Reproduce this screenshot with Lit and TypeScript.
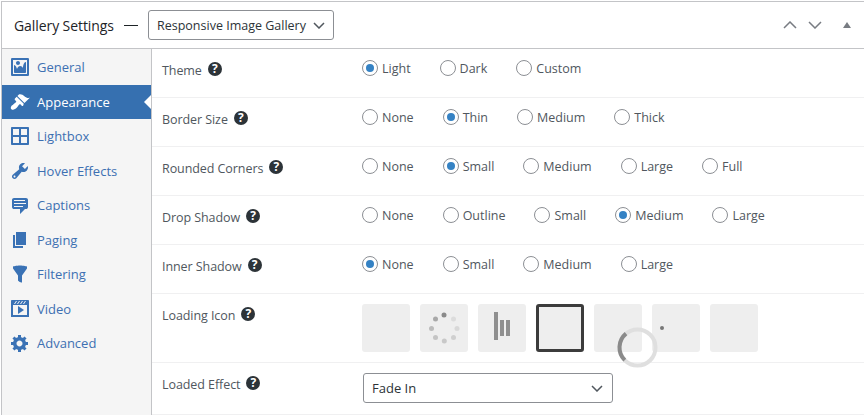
import { LitElement, html, css, svg } from "lit";
import { customElement } from "lit/decorators.js";

const NAV: [string, string, boolean?][] = [
  ["General", "M2.25 1h15.5c.69 0 1.25.56 1.25 1.25v15.5c0 .69-.56 1.25-1.25 1.25H2.25C1.56 19 1 18.44 1 17.75V2.25C1 1.56 1.56 1 2.25 1zM17 17V3H3v14h14zM10 6c0-1.1-.9-2-2-2s-2 .9-2 2 .9 2 2 2 2-.9 2-2zm3 5s0-6 3-6v10c0 .55-.45 1-1 1H5c-.55 0-1-.45-1-1V8c2 0 3 4 3 4s1-3 3-3 3 2 3 2z"],
  ["Appearance", "M14.48 11.06L7.41 3.99l1.5-1.5c.5-.56 2.3-.47 3.51.32 1.21.8 1.43 1.28 2.91 2.1 1.18.64 2.45 1.26 4.45.85zm-.71.71L6.7 4.7 4.93 6.47c-.39.39-.39 1.02 0 1.41l1.06 1.06c.39.39.39 1.03 0 1.42-.6.6-1.43 1.11-2.21 1.69-.35.26-.7.53-1.01.84C1.43 13.23 0 15.74 1.43 17.17s3.94 0 5.28-1.34c.31-.31.58-.66.85-1.01.57-.78 1.08-1.61 1.69-2.21.39-.39 1.02-.39 1.41 0l1.06 1.06c.39.39 1.02.39 1.41 0z", true],
  ["Lightbox", "M2 1h16c.55 0 1 .45 1 1v16c0 .55-.45 1-1 1H2c-.55 0-1-.45-1-1V2c0-.55.45-1 1-1zm7.01 7.99v-6H3v6h6.01zm8 0v-6h-6v6h6zm-8 8.01v-6H3v6h6.01zm8 0v-6h-6v6h6z"],
  ["Hover Effects", "M16.68 9.77c-1.34 1.34-3.3 1.67-4.95.99l-5.41 6.52c-.99.99-2.59.99-3.58 0s-.99-2.59 0-3.57l6.52-5.42c-.68-1.65-.35-3.61.99-4.95 1.28-1.28 3.12-1.62 4.72-1.06l-2.89 2.89 2.82 2.82 2.86-2.87c.53 1.58.18 3.39-1.08 4.65zM3.81 16.21c.4.39 1.04.39 1.43 0 .4-.4.4-1.04 0-1.43-.39-.4-1.03-.4-1.43 0-.39.39-.39 1.03 0 1.43z"],
  ["Captions", "M4 3h12c.55 0 1.02.2 1.41.59S18 4.45 18 5v7c0 .55-.2 1.02-.59 1.41S16.55 14 16 14h-1l-5 5v-5H4c-.55 0-1.02-.2-1.41-.59S2 12.55 2 12V5c0-.55.2-1.02.59-1.41S3.45 3 4 3zm11 2H4v1h11V5zm1 3H4v1h12V8zm-3 3H4v1h9v-1z"],
  ["Paging", "M6 15V2h10v13H6zm-1 1h8v2H3V5h2v11z"],
  ["Filtering", "M3 4.5v-2s3.34-1 7-1 7 1 7 1v2l-5 7.03v6.97s-1.22-.09-2.25-.59S8 16.5 8 16.5v-4.97z"],
  ["Video", "M2 1h16c.55 0 1 .45 1 1v16l-18-.02V2c0-.55.45-1 1-1zm4 1L4 5h1l2-3H6zm4 0H9L7 5h1zm3 0h-1l-2 3h1zm3 0h-1l-2 3h1zm1 14V6H3v10h14zM8 7l6 4-6 4V7z"],
  ["Advanced", "M18 12h-2.18c-.17.7-.44 1.35-.81 1.93l1.54 1.54-2.1 2.1-1.54-1.54c-.58.36-1.23.63-1.91.79V19H8v-2.18c-.68-.16-1.33-.43-1.91-.79l-1.54 1.54-2.12-2.12 1.54-1.54c-.36-.58-.63-1.23-.79-1.91H1V9.03h2.17c.16-.7.44-1.35.8-1.94L2.43 5.55l2.1-2.1 1.54 1.54c.58-.37 1.24-.64 1.93-.81V2h3v2.18c.68.16 1.33.43 1.91.79l1.54-1.54 2.12 2.12-1.54 1.54c.36.59.64 1.24.8 1.94H18V12zm-8.5 1.5c1.66 0 3-1.34 3-3s-1.34-3-3-3-3 1.34-3 3 1.34 3 3 3z"],
];

const ROWS: [string, string[], number][] = [
  ["Theme", ["Light", "Dark", "Custom"], 0],
  ["Border Size", ["None", "Thin", "Medium", "Thick"], 1],
  ["Rounded Corners", ["None", "Small", "Medium", "Large", "Full"], 1],
  ["Drop Shadow", ["None", "Outline", "Small", "Medium", "Large"], 3],
  ["Inner Shadow", ["None", "Small", "Medium", "Large"], 0],
];

const chevron = svg`<path d="M1 1l5 5 5-5" fill="none" stroke="currentColor" stroke-width="1.5"/>`;

const DOTS = [
  [444, 315, "#8a8a8a"], [453.5, 319, "#dcdcdc"], [457, 328.5, "#d8d8d8"], [453.5, 337.5, "#cfcfcf"],
  [444.3, 341, "#c8c8c8"], [435.5, 337.5, "#c4c4c4"], [431.5, 328.5, "#bbbbbb"], [435.5, 319, "#a8a8a8"],
] as const;

@customElement("app-root")
export class AppRoot extends LitElement {
  static styles = css`
    :host { display: block; width: 864px; height: 416px; overflow: hidden; background: #fff;
      font-family: "Open Sans", sans-serif; font-size: 12.5px; color: #50575e; position: relative; }
    .panel { margin: 1px 0 0 1px; border-top: 1px solid #c3c4c7; border-left: 1px solid #c3c4c7; height: 414px; box-sizing: border-box; }
    header { height: 46px; border-bottom: 1px solid #c3c4c7; display: flex; align-items: center; padding-left: 12px; box-sizing: content-box; }
    h2 { margin: 0; font-size: 14px; font-weight: 500; color: #1d2327; letter-spacing: -.08px; width: 100px; white-space: nowrap; }
    .dash { margin: 0 10px 0 10px; width: 14px; height: 1px; background: #1d2327; }
    .select { box-sizing: border-box; border: 1px solid #8c8f94; border-radius: 3px; background: #fff; display: flex;
      align-items: center; justify-content: space-between; color: #2c3338; height: 30px; }
    .select svg { color: #50575e; flex: none; }
    .top { width: 186px; padding: 0 8px; font-size: 12.5px; font-weight: 500; }
    .ctrls { margin-left: auto; display: flex; align-items: center; color: #787c82; padding-right: 13px; }
    .ctrls svg { display: block; }
    .c1 { margin-right: 11px; } .c2 { margin-right: 21px; }
    .body { display: flex; }
    nav { flex: none; background: #f5f5f5; border-right: 1px solid #c3c4c7; height: 366px; box-sizing: border-box; padding-top: 1px; width: 150px; }
    .item { height: 34.5px; display: flex; align-items: center; gap: 7px; padding-left: 8px; color: #3d70b2; font-size: 13px; position: relative; }
    .item svg { width: 20px; height: 20px; flex: none; fill: #3a72b5; }
    .item.on { background: #3670b0; color: #fff; }
    .item.on svg { fill: #fff; }
    .item.on::after { content: ""; position: absolute; right: 0; top: 50%; margin-top: -7px; border: 7px solid transparent; border-right-color: #fff; border-left: 0; }
    main { flex: 1; min-width: 0; }
    .row { display: grid; grid-template-columns: 200px 1fr; padding-left: 10px; border-bottom: 1px solid #f0f0f1; box-sizing: border-box; height: 49px; padding-top: 11px; }
    .row.tall { height: 69px; }
    .row.last { height: 52px; }
    .label { display: flex; align-items: center; gap: 6px; height: 20px; color: #50575e; letter-spacing: -.07px; }
    .help { width: 14px; height: 14px; border-radius: 50%; background: #2c3338; color: #fff; font-size: 12px; font-weight: 700;
      display: flex; align-items: center; justify-content: center; line-height: 1; margin-top: -2px; letter-spacing: 0; }
    .radios { display: flex; gap: 29px; height: 16px; }
    .opt { display: flex; align-items: center; gap: 4px; }
    .radio { width: 16px; height: 16px; box-sizing: border-box; border: 1px solid #8c8f94; border-radius: 50%; background: #fff; display: flex; align-items: center; justify-content: center; }
    .radio.on::before { content: ""; width: 8px; height: 8px; border-radius: 50%; background: #3582c4; }
    .icons { display: flex; gap: 10px; margin-top: -1px; }
    .box { width: 48px; height: 48px; box-sizing: border-box; background: #eee; border-radius: 3px; }
    .box.sel { border: 3px solid #3c3c3c; }
    .bars { display: flex; align-items: center; justify-content: center; gap: 2px; }
    .bars i { display: block; width: 4px; height: 16px; background: #8f8f8f; }
    .bars i:first-child { height: 28px; margin-bottom: 4px; }
    .dots { display: block; }
    .pt { display: flex; align-items: center; justify-content: flex-start; padding-left: 8px; }
    .pt i { display: block; width: 4px; height: 4px; border-radius: 50%; background: #777; }
    .fade { width: 250px; padding: 0 9px 0 8px; margin: -1px 0 0 1px; font-size: 13px; }
    .spin { position: absolute; left: 617px; top: 327px; width: 41px; height: 41px; }
  `;

  private help() { return html`<span class="help">?</span>`; }

  render() {
    return html`
      <div class="panel">
        <header>
          <h2>Gallery Settings</h2>
          <span class="dash"></span>
          <div class="select top">Responsive Image Gallery
            <svg width="12" height="7" viewBox="0 0 12 7">${chevron}</svg></div>
          <div class="ctrls">
            <svg class="c1" width="14" height="8" viewBox="0 0 14 8"><path d="M1 7l6-6 6 6" fill="none" stroke="currentColor" stroke-width="1.5"/></svg>
            <svg class="c2" width="14" height="8" viewBox="0 0 14 8"><path d="M1 1l6 6 6-6" fill="none" stroke="currentColor" stroke-width="1.5"/></svg>
            <svg width="8" height="6" viewBox="0 0 8 6"><path d="M4 0l4 6H0z" fill="currentColor"/></svg>
          </div>
        </header>
        <div class="body">
          <nav>
            ${NAV.map(([t, d, on]) => html`<div class="item ${on ? "on" : ""}">
              <svg viewBox="0 0 20 20"><path d=${d}/></svg><span>${t}</span></div>`)}
          </nav>
          <main>
            ${ROWS.map(([t, opts, sel]) => html`<div class="row">
              <div class="label">${t}${this.help()}</div>
              <div class="radios">${opts.map((o, i) => html`<div class="opt"><span class="radio ${i === sel ? "on" : ""}"></span>${o}</div>`)}</div>
            </div>`)}
            <div class="row tall">
              <div class="label">Loading Icon${this.help()}</div>
              <div class="icons">
                <div class="box"></div>
                <div class="box"><svg class="dots" width="48" height="48" viewBox="420 304 48 48">
                  ${DOTS.map(([x, y, c]) => svg`<circle cx=${x} cy=${y} r="2.5" fill=${c}/>`)}</svg></div>
                <div class="box bars"><i></i><i></i><i></i></div>
                <div class="box sel"></div>
                <div class="box"></div>
                <div class="box pt"><i></i></div>
                <div class="box"></div>
              </div>
            </div>
            <div class="row last">
              <div class="label">Loaded Effect${this.help()}</div>
              <div class="select fade">Fade In
                <svg width="12" height="7" viewBox="0 0 12 7">${chevron}</svg></div>
            </div>
          </main>
        </div>
      </div>
      <svg class="spin" viewBox="0 0 41 41">
        <circle cx="20.5" cy="20.5" r="18" fill="none" stroke="#dfdfdf" stroke-width="4"/>
        <path d="M7.8 33.2A18 18 0 0 1 9 6.6" fill="none" stroke="#8a8a8a" stroke-width="4"/>
      </svg>
    `;
  }
}
